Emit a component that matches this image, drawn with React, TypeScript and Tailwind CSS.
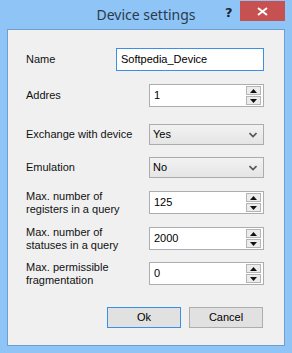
import React from "react";

const font = { fontFamily: '"Liberation Sans", Arial, sans-serif' };

function Spin({ value }: { value: string }) {
  return (
    <div className="flex h-[23px] w-[115px] items-center border border-[#abadb3] bg-white pl-[4px] pr-[2px]">
      <span className="flex-1 text-[11px] text-black">{value}</span>
      <div className="flex flex-col gap-[1px]">
        <div className="flex h-[9px] w-[15px] items-center justify-center border border-[#b5b5b5] bg-[#ececec]">
          <svg width="7" height="4" viewBox="0 0 7 4"><path d="M3.5 0 L7 4 L0 4 Z" fill="#111" /></svg>
        </div>
        <div className="flex h-[9px] w-[15px] items-center justify-center border border-[#b5b5b5] bg-[#ececec]">
          <svg width="7" height="4" viewBox="0 0 7 4"><path d="M0 0 L7 0 L3.5 4 Z" fill="#111" /></svg>
        </div>
      </div>
    </div>
  );
}

function Select({ value }: { value: string }) {
  return (
    <div className="flex h-[21px] w-[115px] items-center border border-[#acacac] bg-gradient-to-b from-[#f2f2f2] to-[#e5e5e5] pl-[3px] pr-[6px]">
      <span className="flex-1 text-[11px] text-black">{value}</span>
      <svg width="8" height="6" viewBox="0 0 8 6">
        <path d="M0.5 1 L4 4.5 L7.5 1" stroke="#555" strokeWidth="1.6" fill="none" />
      </svg>
    </div>
  );
}

function Row({ label, children, mt, h }: { label: React.ReactNode; children: React.ReactNode; mt: string; h: string }) {
  return (
    <div className={`flex items-center ${mt} ${h}`}>
      <div className="w-[141px] whitespace-nowrap pl-[18px] text-[11px] leading-[13px] text-[#111]">{label}</div>
      {children}
    </div>
  );
}

export default function App() {
  return (
    <div className="relative h-[353px] w-[292px] bg-[#8ec5f6] px-[7px] pb-[7px] pt-[29px]" style={font}>
      <div className="absolute left-0 right-0 top-[4px] text-center text-[14px] text-[#2c3a4c]" style={{ fontFamily: '"Noto Sans", "Open Sans", sans-serif' }}>
        Device settings
      </div>
      <div className="absolute left-[225px] top-[3px] text-[13px] font-bold text-[#1e2530]" style={{ fontFamily: '"DejaVu Sans", sans-serif' }}>?</div>
      <div className="absolute left-[240px] top-[1px] flex h-[20px] w-[45px] items-center justify-center bg-[#c75050]">
        <svg width="11" height="9" viewBox="0 0 11 9">
          <path d="M1 1 L10 8 M10 1 L1 8" stroke="#fff" strokeWidth="2" />
        </svg>
      </div>
      <div className="flex h-[317px] flex-col border border-[#6f9fce] bg-[#f0f0f0]">
        <div className="mt-[18px] flex h-[23px] items-center">
          <div className="w-[108px] pl-[18px] text-[11px] text-[#111]">Name</div>
          <div className="flex h-[23px] w-[148px] items-center border border-[#3c8fe6] bg-white pl-[4px] text-[11px] text-black">
            Softpedia_Device
          </div>
        </div>
        <Row label="Addres" mt="mt-[13px]" h="h-[23px]">
          <Spin value="1" />
        </Row>
        <Row label="Exchange with device" mt="mt-[17px]" h="h-[21px]">
          <Select value="Yes" />
        </Row>
        <Row label="Emulation" mt="mt-[12px]" h="h-[21px]">
          <Select value="No" />
        </Row>
        <Row label={<>Max. number of<br />registers in a query</>} mt="mt-[13px]" h="h-[23px]">
          <Spin value="125" />
        </Row>
        <Row label={<>Max. number of<br />statuses in a query</>} mt="mt-[13px]" h="h-[23px]">
          <Spin value="2000" />
        </Row>
        <Row label={<>Max. permissible<br />fragmentation</>} mt="mt-[12px]" h="h-[23px]">
          <Spin value="0" />
        </Row>
        <div className="mt-[22px] flex justify-end gap-[8px] pr-[21px]">
          <div className="flex h-[21px] w-[74px] items-center justify-center border border-[#3c8fe6] bg-[#e1e1e1] text-[11px] text-black">Ok</div>
          <div className="flex h-[21px] w-[74px] items-center justify-center border border-[#adadad] bg-[#e1e1e1] text-[11px] text-black">Cancel</div>
        </div>
      </div>
    </div>
  );
}
